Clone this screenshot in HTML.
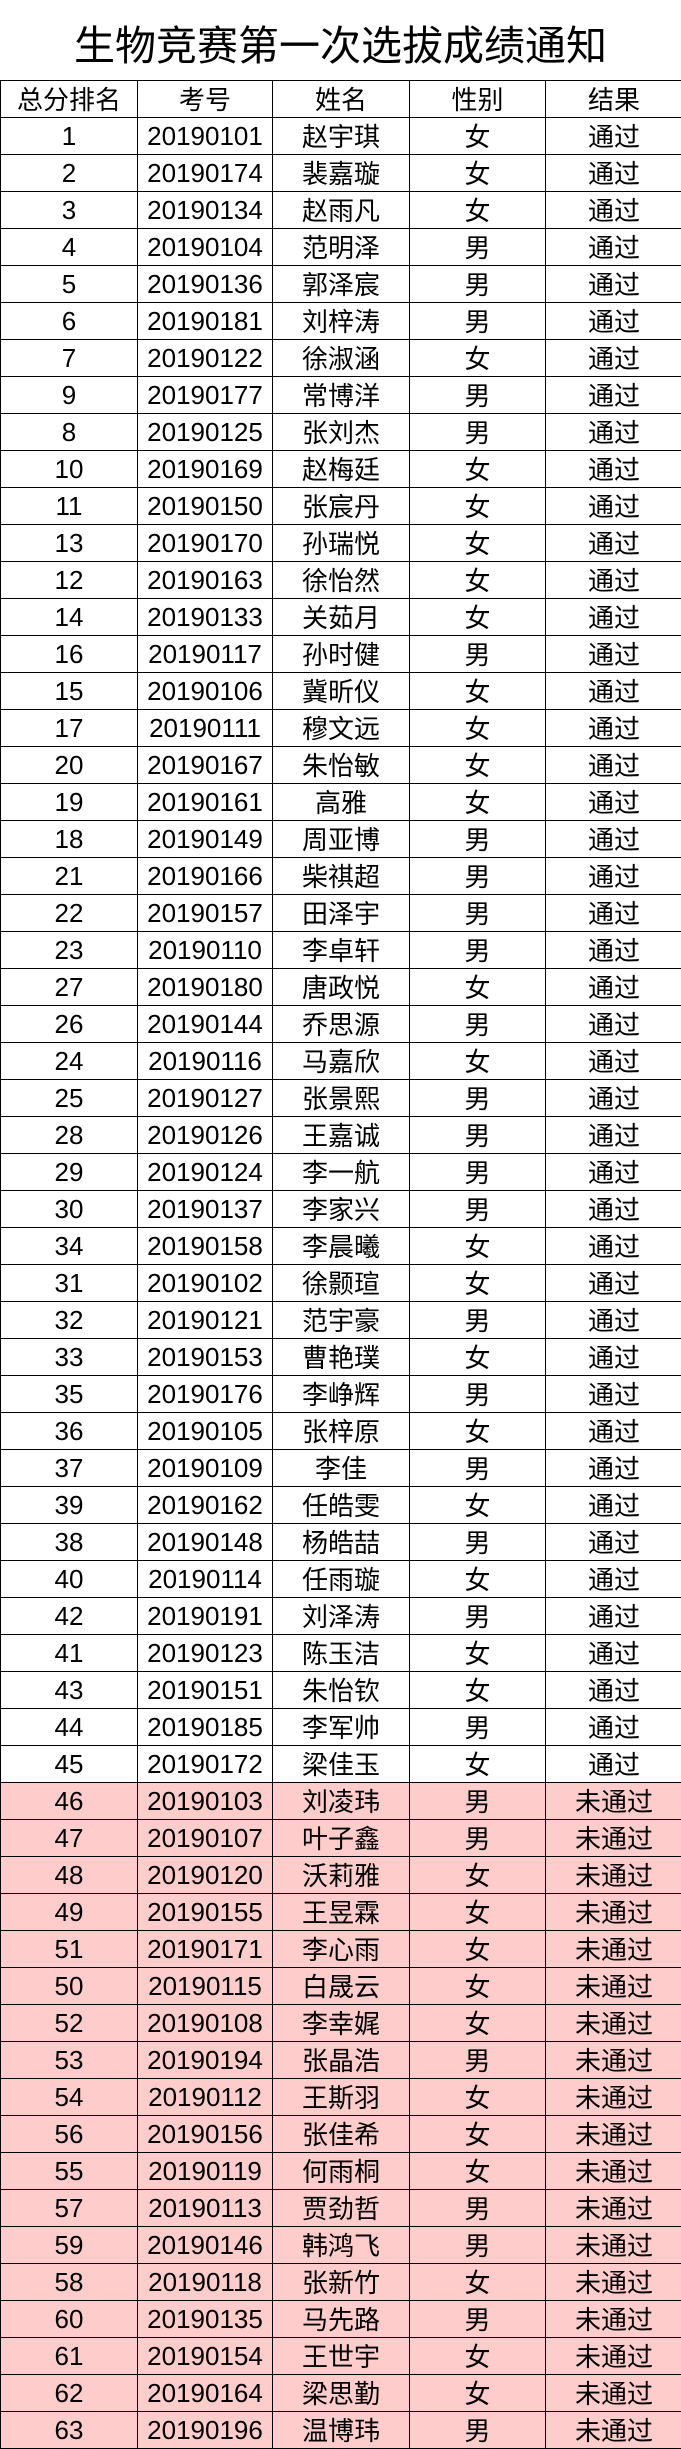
<!DOCTYPE html>
<html><head><meta charset="utf-8"><style>
html,body{margin:0;padding:0;background:#fff;}
body{width:681px;height:2449px;overflow:hidden;position:relative;font-family:"Liberation Sans","Noto Sans CJK SC",sans-serif;color:#000;}
.t{position:absolute;top:0;left:0;width:681px;height:80px;line-height:84px;text-align:center;font-size:41px;font-family:"Noto Sans CJK SC","WenQuanYi Zen Hei",sans-serif;}
table{position:absolute;top:80px;left:0;width:682px;border-collapse:collapse;table-layout:fixed;}
td{border:1px solid #000;height:36px;padding:0;text-align:center;font-size:26px;line-height:36px;white-space:nowrap;overflow:hidden;}
td:nth-child(2){font-family:"Liberation Sans",sans-serif;}
td:nth-child(3),td:nth-child(4),td:nth-child(5){font-family:"Noto Sans CJK SC",sans-serif;}
tr.h td{font-family:"Noto Sans CJK SC",sans-serif;}
tr.p td{background:#ffcccc;}
</style></head><body>
<div class="t">生物竞赛第一次选拔成绩通知</div>
<table>
<colgroup><col style="width:137px"><col style="width:135px"><col style="width:137px"><col style="width:136px"><col style="width:137px"></colgroup>
<tr class="h"><td>总分排名</td><td>考号</td><td>姓名</td><td>性别</td><td>结果</td></tr>
<tr><td>1</td><td>20190101</td><td>赵宇琪</td><td>女</td><td>通过</td></tr>
<tr><td>2</td><td>20190174</td><td>裴嘉璇</td><td>女</td><td>通过</td></tr>
<tr><td>3</td><td>20190134</td><td>赵雨凡</td><td>女</td><td>通过</td></tr>
<tr><td>4</td><td>20190104</td><td>范明泽</td><td>男</td><td>通过</td></tr>
<tr><td>5</td><td>20190136</td><td>郭泽宸</td><td>男</td><td>通过</td></tr>
<tr><td>6</td><td>20190181</td><td>刘梓涛</td><td>男</td><td>通过</td></tr>
<tr><td>7</td><td>20190122</td><td>徐淑涵</td><td>女</td><td>通过</td></tr>
<tr><td>9</td><td>20190177</td><td>常博洋</td><td>男</td><td>通过</td></tr>
<tr><td>8</td><td>20190125</td><td>张刘杰</td><td>男</td><td>通过</td></tr>
<tr><td>10</td><td>20190169</td><td>赵梅廷</td><td>女</td><td>通过</td></tr>
<tr><td>11</td><td>20190150</td><td>张宸丹</td><td>女</td><td>通过</td></tr>
<tr><td>13</td><td>20190170</td><td>孙瑞悦</td><td>女</td><td>通过</td></tr>
<tr><td>12</td><td>20190163</td><td>徐怡然</td><td>女</td><td>通过</td></tr>
<tr><td>14</td><td>20190133</td><td>关茹月</td><td>女</td><td>通过</td></tr>
<tr><td>16</td><td>20190117</td><td>孙时健</td><td>男</td><td>通过</td></tr>
<tr><td>15</td><td>20190106</td><td>冀昕仪</td><td>女</td><td>通过</td></tr>
<tr><td>17</td><td>20190111</td><td>穆文远</td><td>女</td><td>通过</td></tr>
<tr><td>20</td><td>20190167</td><td>朱怡敏</td><td>女</td><td>通过</td></tr>
<tr><td>19</td><td>20190161</td><td>高雅</td><td>女</td><td>通过</td></tr>
<tr><td>18</td><td>20190149</td><td>周亚博</td><td>男</td><td>通过</td></tr>
<tr><td>21</td><td>20190166</td><td>柴祺超</td><td>男</td><td>通过</td></tr>
<tr><td>22</td><td>20190157</td><td>田泽宇</td><td>男</td><td>通过</td></tr>
<tr><td>23</td><td>20190110</td><td>李卓轩</td><td>男</td><td>通过</td></tr>
<tr><td>27</td><td>20190180</td><td>唐政悦</td><td>女</td><td>通过</td></tr>
<tr><td>26</td><td>20190144</td><td>乔思源</td><td>男</td><td>通过</td></tr>
<tr><td>24</td><td>20190116</td><td>马嘉欣</td><td>女</td><td>通过</td></tr>
<tr><td>25</td><td>20190127</td><td>张景熙</td><td>男</td><td>通过</td></tr>
<tr><td>28</td><td>20190126</td><td>王嘉诚</td><td>男</td><td>通过</td></tr>
<tr><td>29</td><td>20190124</td><td>李一航</td><td>男</td><td>通过</td></tr>
<tr><td>30</td><td>20190137</td><td>李家兴</td><td>男</td><td>通过</td></tr>
<tr><td>34</td><td>20190158</td><td>李晨曦</td><td>女</td><td>通过</td></tr>
<tr><td>31</td><td>20190102</td><td>徐颢瑄</td><td>女</td><td>通过</td></tr>
<tr><td>32</td><td>20190121</td><td>范宇豪</td><td>男</td><td>通过</td></tr>
<tr><td>33</td><td>20190153</td><td>曹艳璞</td><td>女</td><td>通过</td></tr>
<tr><td>35</td><td>20190176</td><td>李峥辉</td><td>男</td><td>通过</td></tr>
<tr><td>36</td><td>20190105</td><td>张梓原</td><td>女</td><td>通过</td></tr>
<tr><td>37</td><td>20190109</td><td>李佳</td><td>男</td><td>通过</td></tr>
<tr><td>39</td><td>20190162</td><td>任皓雯</td><td>女</td><td>通过</td></tr>
<tr><td>38</td><td>20190148</td><td>杨皓喆</td><td>男</td><td>通过</td></tr>
<tr><td>40</td><td>20190114</td><td>任雨璇</td><td>女</td><td>通过</td></tr>
<tr><td>42</td><td>20190191</td><td>刘泽涛</td><td>男</td><td>通过</td></tr>
<tr><td>41</td><td>20190123</td><td>陈玉洁</td><td>女</td><td>通过</td></tr>
<tr><td>43</td><td>20190151</td><td>朱怡钦</td><td>女</td><td>通过</td></tr>
<tr><td>44</td><td>20190185</td><td>李军帅</td><td>男</td><td>通过</td></tr>
<tr><td>45</td><td>20190172</td><td>梁佳玉</td><td>女</td><td>通过</td></tr>
<tr class="p"><td>46</td><td>20190103</td><td>刘凌玮</td><td>男</td><td>未通过</td></tr>
<tr class="p"><td>47</td><td>20190107</td><td>叶子鑫</td><td>男</td><td>未通过</td></tr>
<tr class="p"><td>48</td><td>20190120</td><td>沃莉雅</td><td>女</td><td>未通过</td></tr>
<tr class="p"><td>49</td><td>20190155</td><td>王昱霖</td><td>女</td><td>未通过</td></tr>
<tr class="p"><td>51</td><td>20190171</td><td>李心雨</td><td>女</td><td>未通过</td></tr>
<tr class="p"><td>50</td><td>20190115</td><td>白晟云</td><td>女</td><td>未通过</td></tr>
<tr class="p"><td>52</td><td>20190108</td><td>李幸娓</td><td>女</td><td>未通过</td></tr>
<tr class="p"><td>53</td><td>20190194</td><td>张晶浩</td><td>男</td><td>未通过</td></tr>
<tr class="p"><td>54</td><td>20190112</td><td>王斯羽</td><td>女</td><td>未通过</td></tr>
<tr class="p"><td>56</td><td>20190156</td><td>张佳希</td><td>女</td><td>未通过</td></tr>
<tr class="p"><td>55</td><td>20190119</td><td>何雨桐</td><td>女</td><td>未通过</td></tr>
<tr class="p"><td>57</td><td>20190113</td><td>贾劲哲</td><td>男</td><td>未通过</td></tr>
<tr class="p"><td>59</td><td>20190146</td><td>韩鸿飞</td><td>男</td><td>未通过</td></tr>
<tr class="p"><td>58</td><td>20190118</td><td>张新竹</td><td>女</td><td>未通过</td></tr>
<tr class="p"><td>60</td><td>20190135</td><td>马先路</td><td>男</td><td>未通过</td></tr>
<tr class="p"><td>61</td><td>20190154</td><td>王世宇</td><td>女</td><td>未通过</td></tr>
<tr class="p"><td>62</td><td>20190164</td><td>梁思勤</td><td>女</td><td>未通过</td></tr>
<tr class="p"><td>63</td><td>20190196</td><td>温博玮</td><td>男</td><td>未通过</td></tr>
</table>
</body></html>
